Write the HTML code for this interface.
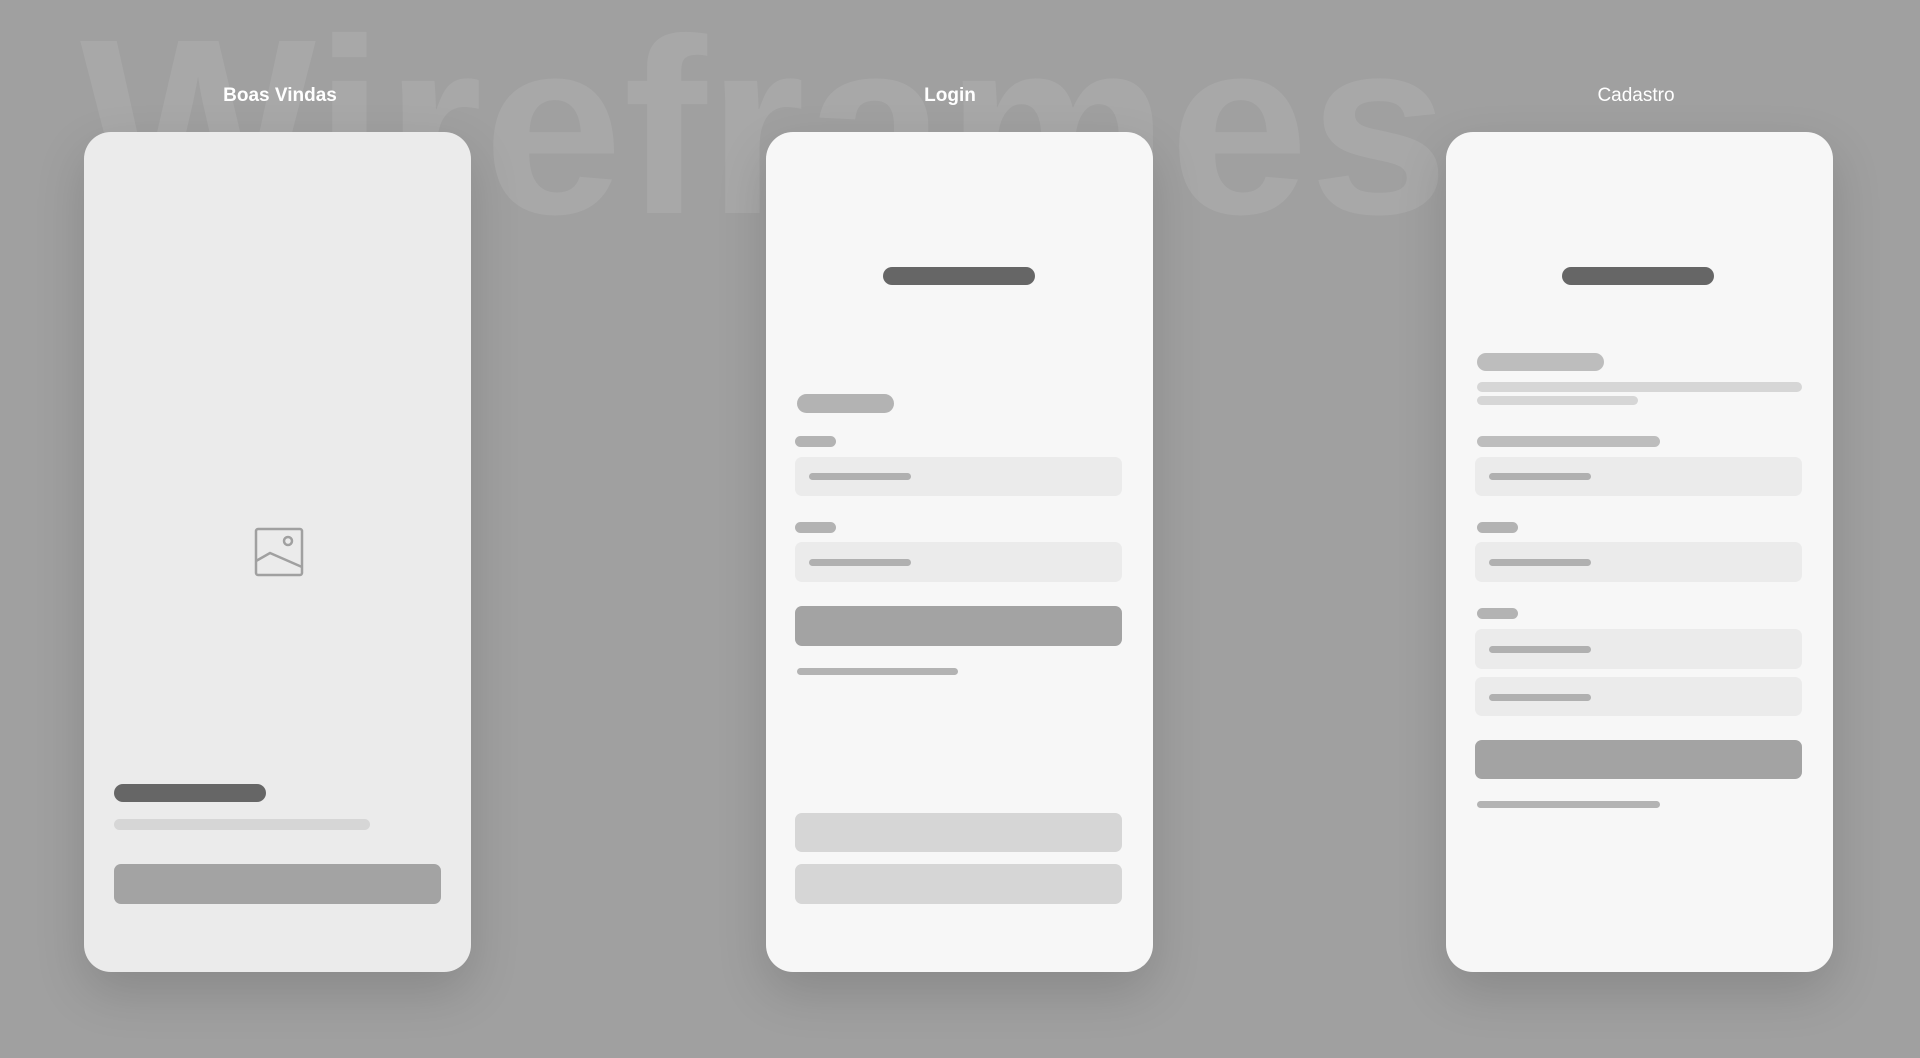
<!DOCTYPE html>
<html><head><meta charset="utf-8"><style>
*{margin:0;padding:0;box-sizing:border-box}
body{width:1920px;height:1058px;background:#a0a0a0;position:relative;overflow:hidden;font-family:"Liberation Sans",sans-serif}
.big{position:absolute;left:80px;font-size:250px;font-weight:bold;color:#a8a8a8;line-height:1;top:2px;letter-spacing:1px}
.lbl{position:absolute;top:85px;width:300px;text-align:center;color:#fff;font-size:19px;font-weight:bold}
.card{position:absolute;top:132px;width:387px;height:840px;border-radius:27px;background:#f7f7f7;box-shadow:0 20px 50px rgba(0,0,0,0.15)}
.r{position:absolute;border-radius:10px}
</style></head><body>
<div class="big">Wireframes</div>
<div class="lbl" style="left:130px">Boas Vindas</div>
<div class="lbl" style="left:800px">Login</div>
<div class="lbl" style="left:1486px;font-weight:normal">Cadastro</div>

<div class="card" style="left:84px;background:#ebebeb"></div>
<svg style="position:absolute;left:254px;top:527px" width="50" height="50" viewBox="0 0 50 50" fill="none" stroke="#a0a0a0" stroke-width="2.5"><rect x="2" y="2" width="46" height="46" rx="2"/><circle cx="34" cy="14" r="4"/><path d="M2 34 L16 26 L48 40"/></svg>
<div class="r" style="left:114px;top:784px;width:152px;height:18px;background:#666"></div>
<div class="r" style="left:114px;top:819px;width:256px;height:11px;background:#d6d6d6"></div>
<div class="r" style="left:114px;top:864px;width:327px;height:40px;background:#a3a3a3;border-radius:7px"></div>

<div class="card" style="left:766px"></div>
<div class="r" style="left:883px;top:267px;width:152px;height:18px;background:#666"></div>
<div class="r" style="left:797px;top:394px;width:97px;height:19px;background:#b3b3b3"></div>
<div class="r" style="left:795px;top:436px;width:41px;height:11px;background:#b3b3b3"></div>
<div class="r" style="left:795px;top:457px;width:327px;height:39px;background:#ebebeb;border-radius:7px"></div>
<div class="r" style="left:809px;top:473px;width:102px;height:7px;background:#b0b0b0"></div>
<div class="r" style="left:795px;top:522px;width:41px;height:11px;background:#b3b3b3"></div>
<div class="r" style="left:795px;top:542px;width:327px;height:40px;background:#ebebeb;border-radius:7px"></div>
<div class="r" style="left:809px;top:559px;width:102px;height:7px;background:#b0b0b0"></div>
<div class="r" style="left:795px;top:606px;width:327px;height:40px;background:#a3a3a3;border-radius:7px"></div>
<div class="r" style="left:797px;top:668px;width:161px;height:7px;background:#b3b3b3"></div>
<div class="r" style="left:795px;top:813px;width:327px;height:39px;background:#d6d6d6;border-radius:7px"></div>
<div class="r" style="left:795px;top:864px;width:327px;height:40px;background:#d6d6d6;border-radius:7px"></div>

<div class="card" style="left:1446px"></div>
<div class="r" style="left:1562px;top:267px;width:152px;height:18px;background:#666"></div>
<div class="r" style="left:1477px;top:353px;width:127px;height:18px;background:#bdbdbd"></div>
<div class="r" style="left:1477px;top:382px;width:325px;height:10px;background:#d6d6d6"></div>
<div class="r" style="left:1477px;top:396px;width:161px;height:9px;background:#d6d6d6"></div>
<div class="r" style="left:1477px;top:436px;width:183px;height:11px;background:#bdbdbd"></div>
<div class="r" style="left:1475px;top:457px;width:327px;height:39px;background:#ebebeb;border-radius:7px"></div>
<div class="r" style="left:1489px;top:473px;width:102px;height:7px;background:#b0b0b0"></div>
<div class="r" style="left:1477px;top:522px;width:41px;height:11px;background:#b3b3b3"></div>
<div class="r" style="left:1475px;top:542px;width:327px;height:40px;background:#ebebeb;border-radius:7px"></div>
<div class="r" style="left:1489px;top:559px;width:102px;height:7px;background:#b0b0b0"></div>
<div class="r" style="left:1477px;top:608px;width:41px;height:11px;background:#b3b3b3"></div>
<div class="r" style="left:1475px;top:629px;width:327px;height:40px;background:#ebebeb;border-radius:7px"></div>
<div class="r" style="left:1489px;top:646px;width:102px;height:7px;background:#b0b0b0"></div>
<div class="r" style="left:1475px;top:677px;width:327px;height:39px;background:#ebebeb;border-radius:7px"></div>
<div class="r" style="left:1489px;top:694px;width:102px;height:7px;background:#b0b0b0"></div>
<div class="r" style="left:1475px;top:740px;width:327px;height:39px;background:#a3a3a3;border-radius:7px"></div>
<div class="r" style="left:1477px;top:801px;width:183px;height:7px;background:#b3b3b3"></div>
</body></html>
